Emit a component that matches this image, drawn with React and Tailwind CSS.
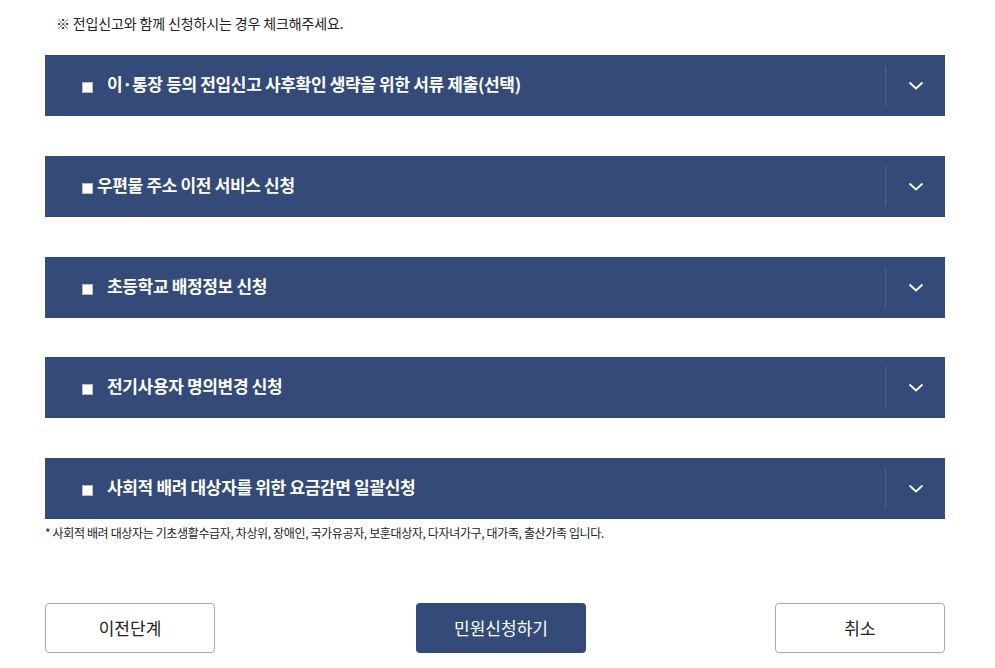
import React from 'react';

const items = [
  { label: '이·통장 등의 전입신고 사후확인 생략을 위한 서류 제출(선택)', gap: true },
  { label: '우편물 주소 이전 서비스 신청', gap: false },
  { label: '초등학교 배정정보 신청', gap: true },
  { label: '전기사용자 명의변경 신청', gap: true },
  { label: '사회적 배려 대상자를 위한 요금감면 일괄신청', gap: true },
];

const font = { fontFamily: '"Noto Sans CJK KR", "Noto Sans", sans-serif' };

const Chevron = () => (
  <svg width="16" height="9" viewBox="0 0 16 9" fill="none">
    <path d="M1.5 1.5 L8 7.5 L14.5 1.5" stroke="white" strokeWidth="1.8" />
  </svg>
);

const App = () => {
  return (
    <div className="w-[995px] h-[668px] bg-white overflow-hidden" style={font}>
      <div className="w-[900px] ml-[45px]">
        <p className="pt-[12px] pl-[11px] text-[14px] leading-[22px] tracking-[-0.01em] text-[#222]">
          ※ 전입신고와 함께 신청하시는 경우 체크해주세요.
        </p>

        <div className="mt-[21px] flex flex-col gap-[39.75px]">
          {items.map((item, i) => (
            <div key={i} className="h-[61px] bg-[#344b79] flex items-center">
              <div className="flex-1 h-full flex items-start pl-[37px]">
                <span className="w-[11px] h-[11px] bg-white border border-[#bbb] mt-[27px] shrink-0" />
                <span
                  className={`${item.gap ? 'ml-[14px]' : 'ml-[4px]'} mt-[20px] text-white font-bold text-[17px] tracking-[-0.02em] leading-[17px]`}
                >
                  {item.label}
                </span>
              </div>
              <div className="w-px h-[41px] bg-[#4a6090]" />
              <div className="w-[59px] flex items-center justify-center">
                <Chevron />
              </div>
            </div>
          ))}
        </div>

        <p className="mt-[5px] text-[12px] leading-[18px] tracking-[-0.03em] text-[#222]">
          * 사회적 배려 대상자는 기초생활수급자, 차상위, 장애인, 국가유공자, 보훈대상자, 다자녀가구, 대가족, 출산가족 입니다.
        </p>

        <div className="mt-[61px] flex items-center">
          <button className="w-[170px] h-[50px] rounded-[4px] border border-[#aaa] bg-white text-[17px] text-[#222]">
            이전단계
          </button>
          <button className="ml-[201px] w-[170px] h-[50px] rounded-[4px] bg-[#344b79] text-[17px] text-white">
            민원신청하기
          </button>
          <button className="ml-auto w-[170px] h-[50px] rounded-[4px] border border-[#aaa] bg-white text-[17px] text-[#222]">
            취소
          </button>
        </div>
      </div>
    </div>
  );
};

export default App;
